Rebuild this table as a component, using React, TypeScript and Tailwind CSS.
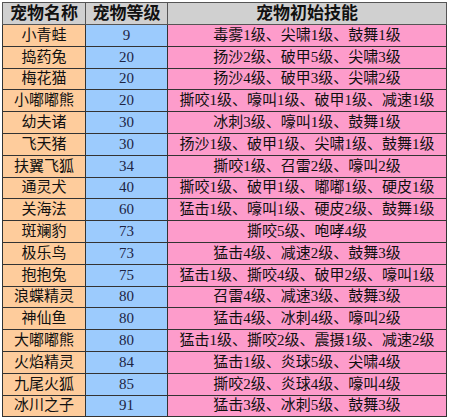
const pets = [
  { name: '小青蛙', level: 9, skills: '毒雾1级、尖啸1级、鼓舞1级' },
  { name: '捣药兔', level: 20, skills: '扬沙2级、破甲5级、尖啸3级' },
  { name: '梅花猫', level: 20, skills: '扬沙4级、破甲3级、尖啸2级' },
  { name: '小嘟嘟熊', level: 20, skills: '撕咬1级、嚎叫1级、破甲1级、减速1级' },
  { name: '幼夫诸', level: 30, skills: '冰刺3级、嚎叫1级、鼓舞1级' },
  { name: '飞天猪', level: 30, skills: '扬沙1级、破甲1级、尖啸1级、鼓舞1级' },
  { name: '扶翼飞狐', level: 34, skills: '撕咬1级、召雷2级、嚎叫2级' },
  { name: '通灵犬', level: 40, skills: '撕咬1级、破甲1级、嘟嘟1级、硬皮1级' },
  { name: '关海法', level: 60, skills: '猛击1级、嚎叫1级、硬皮2级、鼓舞1级' },
  { name: '斑斓豹', level: 73, skills: '撕咬5级、咆哮4级' },
  { name: '极乐鸟', level: 73, skills: '猛击4级、减速2级、鼓舞3级' },
  { name: '抱抱兔', level: 75, skills: '猛击1级、撕咬4级、破甲2级、嚎叫1级' },
  { name: '浪蝶精灵', level: 80, skills: '召雷4级、减速3级、鼓舞3级' },
  { name: '神仙鱼', level: 80, skills: '猛击4级、冰刺4级、嚎叫2级' },
  { name: '大嘟嘟熊', level: 80, skills: '猛击1级、撕咬2级、震摄1级、减速2级' },
  { name: '火焰精灵', level: 84, skills: '猛击1级、炎球5级、尖啸4级' },
  { name: '九尾火狐', level: 85, skills: '撕咬2级、炎球4级、嚎叫4级' },
  { name: '冰川之子', level: 91, skills: '猛击3级、冰刺5级、鼓舞3级' },
];

export default function App() {
  return (
    <div
      className="w-[450px] h-[419px] overflow-hidden bg-white pl-[2px] pt-[2px]"
      style={{ fontFamily: '"Liberation Serif", "Noto Sans CJK SC", serif' }}
    >
      <table className="border-collapse border border-[#555] text-[15px] text-[#111] leading-none">
        <thead>
          <tr className="h-[22px] bg-[#d0d0d0] text-[17px] font-bold">
            <th className="w-[83px] border border-[#555] p-0 text-center">宠物名称</th>
            <th className="w-[82px] border border-[#555] p-0 text-center">宠物等级</th>
            <th className="w-[279px] border border-[#555] p-0 text-center">宠物初始技能</th>
          </tr>
        </thead>
        <tbody>
          {pets.map((pet, idx) => (
            <tr key={idx} className="h-[21.8px]">
              <td className="bg-[#fecc9c] border-r border-b border-l border-[#333] p-0 text-center">{pet.name}</td>
              <td className="bg-[#9ccbfd] border-r border-b border-[#333] p-0 text-center text-[#1c2444]">{pet.level}</td>
              <td className="bg-[#fd9ccb] border-r border-b border-[#333] p-0 text-center">{pet.skills}</td>
            </tr>
          ))}
        </tbody>
      </table>
    </div>
  );
}
